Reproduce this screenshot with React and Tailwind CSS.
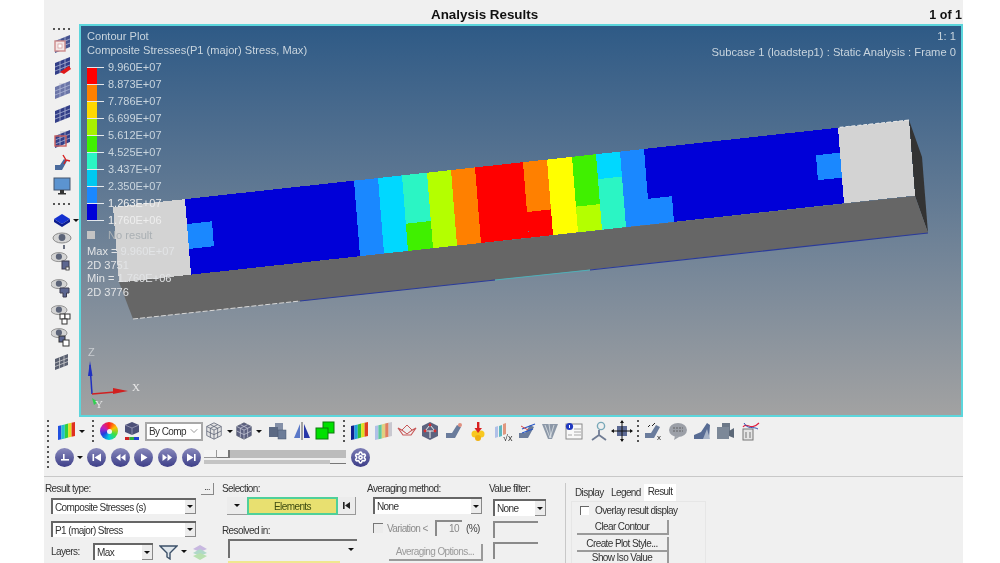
import React from 'react';
import { ChevronDown, Settings } from 'lucide-react';

const FONT = "font-['Liberation_Sans',Arial,sans-serif]";

// beam face: u runs along the top edge, v goes from top edge (0) to bottom edge (1)
const pt = (u, v) => [u + 6 * v, 207 - 0.1093 * (u - 113) + 75.5 * v];
const quad = (u0, u1, v0, v1) =>
  [pt(u0, v0), pt(u1, v0), pt(u1, v1), pt(u0, v1)].map((p) => p.join(',')).join(' ');

const BLUE = '#0000d8';
const SKY = '#1a88ff';
const CYAN = '#00d8ff';
const TEAL = '#2bf5c4';
const GREEN = '#40f000';
const LIME = '#b4ff00';
const ORANGE = '#ff8000';
const RED = '#ff0000';
const YELLOW = '#ffff00';
const GREY = '#d3d3d3';

const cells = [
  [113, 185, 0, 1, GREY],
  [185, 354, 0, 1, BLUE],
  [185, 210, 0.33, 0.66, SKY],
  [354, 378, 0, 1, SKY],
  [378, 402, 0, 1, CYAN],
  [402, 427, 0, 0.64, TEAL],
  [402, 427, 0.64, 1, GREEN],
  [427, 451, 0, 1, LIME],
  [451, 475, 0, 1, ORANGE],
  [475, 523, 0, 1, RED],
  [523, 547, 0, 0.66, ORANGE],
  [523, 547, 0.66, 1, RED],
  [547, 572, 0, 1, YELLOW],
  [572, 596, 0, 0.66, GREEN],
  [572, 596, 0.66, 1, LIME],
  [596, 620, 0, 0.33, CYAN],
  [596, 620, 0.33, 1, TEAL],
  [620, 644, 0, 1, SKY],
  [644, 838, 0, 1, BLUE],
  [644, 668, 0.66, 1, SKY],
  [814, 838, 0.33, 0.66, SKY],
  [838, 909, 0, 1, GREY],
];

const legend = [
  ['9.960E+07', '#ff0000'],
  ['8.873E+07', '#ff8000'],
  ['7.786E+07', '#ffd800'],
  ['6.699E+07', '#a8f000'],
  ['5.612E+07', '#40f000'],
  ['4.525E+07', '#2bf5c4'],
  ['3.437E+07', '#00c8f0'],
  ['2.350E+07', '#1a88ff'],
  ['1.263E+07', '#0000d8'],
  ['1.760E+06', null],
];

const Beam = () => (
  <svg className="absolute inset-0 w-full h-full" viewBox="81 26 880 389">
    <polygon points="909,120 922,157 928,233 915,196" fill="#333333" />
    <polygon points="119,282 915,196 928,233 133,319" fill="#666666" />
    {cells.map(([u0, u1, v0, v1, fill], i) => (
      <polygon key={i} points={quad(u0, u1, v0, v1)} fill={fill} shapeRendering="crispEdges" />
    ))}
    <line x1="133" y1="319" x2="300" y2="301" stroke="#d8d8d8" strokeWidth="1" strokeDasharray="5 2" />
    <line x1="300" y1="301" x2="495" y2="280" stroke="#2a3a9a" strokeWidth="1.2" />
    <line x1="495" y1="280" x2="590" y2="270" stroke="#4fb0b8" strokeWidth="1" />
    <line x1="590" y1="270" x2="928" y2="233" stroke="#2a3a9a" strokeWidth="1.2" />
    <line x1="909" y1="120" x2="838" y2="127.5" stroke="#e8e8e8" strokeWidth="1" strokeDasharray="4 2" />
    {/* triad */}
    <line x1="92" y1="394" x2="90" y2="365" stroke="#2030c0" strokeWidth="1.5" />
    <polygon points="90,361 92.5,376 88,376" fill="#2030c0" />
    <line x1="92" y1="394" x2="115" y2="392" stroke="#d02020" strokeWidth="1.5" />
    <polygon points="128,391 113,388 113,394" fill="#d02020" />
    <polygon points="92,398 98,402 94,405" fill="#30d050" />
  </svg>
);

const ViewportText = () => (
  <>
    <div className="absolute left-[6px] top-[3px] text-[11.1px] leading-[14px] text-[#c9d5de]">
      <div>Contour Plot</div>
      <div>Composite Stresses(P1 (major) Stress, Max)</div>
      <div className="mt-[2px] flex flex-col">
        {legend.map(([label, color], i) => (
          <div key={label} className="flex h-[17px] relative">
            {color && <div className="w-[10px] h-[17px] absolute left-0 top-[9px]" style={{ background: color }} />}
            <div className="w-[17px] h-px bg-[#e4e8ec] absolute top-[8px] left-0" />
            <span className={`ml-[21px] leading-[17px] text-[11px] ${i > 7 ? 'text-[#eeeeee]' : 'text-[#c9d5de]'}`}>{label}</span>
          </div>
        ))}
      </div>
      <div className="flex items-center h-[15px] -mt-[2px]">
        <div className="w-[8px] h-[8px] bg-[#c4c4c4]" />
        <span className="ml-[13px] text-[#aab0b4]">No result</span>
      </div>
      <div className="text-[#e2e4e6] leading-[13.5px] mt-[3px]">
        <div>Max = 9.960E+07</div>
        <div>2D 3751</div>
        <div>Min = 1.760E+06</div>
        <div>2D 3776</div>
      </div>
    </div>
    <div className="absolute right-[5px] top-[2px] text-right text-[11.2px] leading-[16px] text-[#c9d5de]">
      <div>1: 1</div>
      <div>Subcase 1 (loadstep1) : Static Analysis : Frame 0</div>
    </div>
    <span className="absolute left-[7px] top-[318px] text-[11px] text-[#c8ccd0]">Z</span>
    <span className="absolute left-[51px] top-[353px] text-[11px] font-['Liberation_Serif',serif] text-[#e8e8e8]">X</span>
    <span className="absolute left-[14px] top-[370px] text-[11px] font-['Liberation_Serif',serif] text-[#e8e8e8]">Y</span>
  </>
);

const Plate = ({ dark, pale }) => (
  <g>
    <polygon points="4,9 19,3 19,15 4,21" fill={pale ? '#6c76a8' : dark ? '#333f88' : '#46538f'} />
    <path d="M4 13 L19 7 M4 17 L19 11 M9 7 V19 M14 5 V17" stroke="#b9c0dc" strokeWidth="0.7" />
  </g>
);

const Svg = ({ size = 22, children }) => (
  <svg className="shrink-0" width={size} height={size} viewBox="0 0 22 22">{children}</svg>
);

const Eye = ({ large }) => (
  <g transform={large ? 'translate(0,0)' : 'translate(-2,-3) scale(0.9)'}>
    <ellipse cx="11" cy="9" rx="9" ry="5" fill="#d4d4d4" stroke="#8a8a8a" />
    <circle cx="11" cy="8.5" r="3.4" fill="#5c6478" />
  </g>
);

const Dots = ({ vertical, count = 4 }) => (
  <div className={vertical ? 'flex flex-col gap-[3px] w-[2px]' : 'flex gap-[3px]'}>
    {Array.from({ length: count }).map((_, i) => (
      <div key={i} className="w-[2px] h-[2px] bg-[#222222] rounded-full" />
    ))}
  </div>
);

const Caret = () => (
  <div className="w-0 h-0 border-x-[3px] border-x-transparent border-t-[3px] border-t-[#111111]" />
);

const SideBar = () => (
  <div className="w-[35px] h-full flex flex-col items-center shrink-0">
    <div className="h-[9px] flex items-center"><Dots /></div>
    <div className="h-[20px] flex items-center">
      <Svg><Plate /><rect x="4" y="9" width="10" height="10" fill="#f3e6e6" stroke="#cc8a8a" strokeWidth="1.4" /><rect x="7" y="12" width="4" height="4" fill="#fff" stroke="#cc8a8a" strokeWidth="0.6" /></Svg>
    </div>
    <div className="h-[24px] flex items-center">
      <Svg><Plate dark /><path d="M9 18 L18 12 L20 15 L13 20 Z" fill="#e01818" /></Svg>
    </div>
    <div className="h-[24px] flex items-center">
      <Svg><rect x="8" y="5" width="11" height="11" fill="#dcdce4" /><Plate pale /></Svg>
    </div>
    <div className="h-[24px] flex items-center">
      <Svg><Plate dark /></Svg>
    </div>
    <div className="h-[26px] flex items-center">
      <Svg><rect x="9" y="4" width="10" height="11" fill="#d8d8dc" /><Plate dark /><rect x="4" y="9" width="11" height="10" fill="none" stroke="#c86060" strokeWidth="1.4" /></Svg>
    </div>
    <div className="h-[23px] flex items-center">
      <Svg><path d="M4 18 V13 H9 L13 7 L16 9 L11 18 Z" fill="#4a6a9c" /><path d="M12 3 L15 8 M15 8 L19 9 M15 8 L13 12" stroke="#d82020" strokeWidth="1.4" fill="none" /></Svg>
    </div>
    <div className="h-[23px] flex items-center">
      <Svg><rect x="3" y="3" width="16" height="12" fill="#5c94d0" stroke="#44546c" /><rect x="9" y="15" width="4" height="3" fill="#333" /><rect x="7" y="18" width="8" height="1.5" fill="#333" /></Svg>
    </div>
    <div className="h-[13px] flex items-center"><Dots /></div>
    <div className="h-[19px] flex items-center relative">
      <Svg><path d="M11 5 L19 10 L11 15 L3 10 Z" fill="#1430d0" /><path d="M3 10 V13 L11 18 L19 13 V10 L11 15 Z" fill="#0c1c90" /></Svg>
      <div className="absolute -right-[6px] top-[9px]"><Caret /></div>
    </div>
    <div className="h-[21px] flex items-center">
      <Svg><Eye large /><rect x="12" y="16" width="2" height="4" fill="#6a7080" /></Svg>
    </div>
    <div className="h-[26px] flex items-center">
      <Svg><Eye /><rect x="11" y="9" width="7" height="8" fill="#5c6690" stroke="#3c3c50" /><rect x="15" y="15" width="3" height="3" fill="#fff" stroke="#555" /></Svg>
    </div>
    <div className="h-[28px] flex items-center">
      <Svg><Eye /><path d="M9 9 H18 V14 H15.5 V18 H12 V14 H9 Z" fill="#5c6690" stroke="#3c3c50" /></Svg>
    </div>
    <div className="h-[23px] flex items-center">
      <Svg><Eye /><rect x="9" y="9" width="5" height="5" fill="#fff" stroke="#333" /><rect x="14" y="9" width="5" height="5" fill="#fff" stroke="#333" /><rect x="11" y="14" width="5" height="5" fill="#fff" stroke="#333" /></Svg>
    </div>
    <div className="h-[23px] flex items-center">
      <Svg><Eye /><rect x="8" y="8" width="6" height="6" fill="#5c6690" stroke="#333" /><rect x="12" y="12" width="6" height="6" fill="#fff" stroke="#333" /></Svg>
    </div>
    <div className="h-[21px] flex items-center">
      <Svg><polygon points="4,9 17,4 17,15 4,20" fill="#5a6070" /><path d="M4 13 L17 8 M4 16.5 L17 11.5 M8.5 7.5 V18.5 M13 5.8 V17" stroke="#d8d8d8" strokeWidth="0.7" /></Svg>
    </div>
  </div>
);

const Tool = ({ w = 24, children }) => (
  <div className="flex items-center justify-center h-[22px] shrink-0" style={{ width: w }}>{children}</div>
);

const Rainbow = ({ bars }) => (
  <Svg>
    {bars.map((c, i) => (
      <polygon
        key={c}
        points={`${3 + i * 3.4},${6 - i * 0.8} ${6.4 + i * 3.4},${5.2 - i * 0.8} ${6.4 + i * 3.4},${19.2 - i * 0.8} ${3 + i * 3.4},${20 - i * 0.8}`}
        fill={c}
      />
    ))}
  </Svg>
);

const Cube = ({ fill, line }) => (
  <Svg size={20}>
    <path d="M11 2 L19 6 V16 L11 20 L3 16 V6 Z" fill={fill} stroke="#555c70" strokeWidth="0.8" />
    <path d="M3 6 L11 10 L19 6 M11 10 V20 M3 11 L11 15 L19 11 M7 4 L15 8 M15 4 L7 8 M7 8 V18 M15 8 V18" stroke={line} strokeWidth="0.8" fill="none" />
  </Svg>
);

const Stair = ({ children }) => (
  <Svg>
    <path d="M3 18 V13 L9 13 L14 5 L18 7 L12 18 Z" fill="#6a7c9c" />
    {children}
  </Svg>
);

const ToolbarRow1 = () => (
  <div className="flex items-center h-[22px] pl-[3px]">
    <Dots vertical count={5} />
    <div className="ml-[5px]"><Tool w={24}><Rainbow bars={['#2050e0', '#20c0d0', '#30d040', '#e0e020', '#e03020']} /></Tool></div>
    <div className="ml-[1px] mr-[7px]"><Caret /></div>
    <Dots vertical count={5} />
    <div className="ml-[6px] w-[18px] h-[18px] rounded-full bg-[conic-gradient(#ff2020,#ffc000,#40e040,#00d0e0,#2040e0,#c020c0,#ff2020)] flex items-center justify-center shrink-0">
      <div className="w-[5px] h-[5px] rounded-full bg-[#f4f4f4]" />
    </div>
    <div className="ml-[3px]">
      <Tool w={22}>
        <Svg><path d="M11 2 L18 5 V12 L11 15 L4 12 V5 Z" fill="#4c5078" /><path d="M4 5 L11 8 L18 5 M11 8 V15" stroke="#9a9cb8" strokeWidth="0.8" fill="none" /><rect x="4" y="17" width="4.5" height="3" fill="#d02020" /><rect x="8.5" y="17" width="4.5" height="3" fill="#30b040" /><rect x="13" y="17" width="5" height="3" fill="#2040d0" /></Svg>
      </Tool>
    </div>
    <div className="ml-[2px] w-[58px] h-[19px] bg-white border-2 border-[#a8a8a8] flex items-center justify-between pl-[2px] pr-[1px] text-[10px] tracking-[-0.6px] text-[#333] whitespace-nowrap shrink-0">
      <span>By Comp</span><ChevronDown size={12} strokeWidth={1} />
    </div>
    <Tool w={22}><Cube fill="#e4e4e4" line="#555c70" /></Tool>
    <div className="mx-[2px]"><Caret /></div>
    <Tool w={18}><Cube fill="#5c6080" line="#c8cad8" /></Tool>
    <div className="mx-[3px]"><Caret /></div>
    <Tool w={24}>
      <Svg><rect x="9" y="3" width="8" height="13" fill="#8490a8" /><rect x="3" y="7" width="9" height="10" fill="#5c6a84" /><rect x="12" y="10" width="8" height="9" fill="#6c7c98" stroke="#46546c" strokeWidth="0.5" /></Svg>
    </Tool>
    <Tool w={26}>
      <Svg><polygon points="9,4 9,18 3,18" fill="#5a78c8" /><rect x="10.5" y="2" width="1" height="18" fill="#555" /><polygon points="13,4 13,18 19,18" fill="#2838a8" /></Svg>
    </Tool>
    <Tool w={20}>
      <Svg><rect x="9" y="2" width="11" height="11" fill="#00e000" stroke="#0c7a0c" /><rect x="2" y="8" width="12" height="11" fill="#00e000" stroke="#0c7a0c" /></Svg>
    </Tool>
    <div className="ml-[8px]"><Dots vertical count={5} /></div>
    <div className="ml-px"><Tool w={25}><Rainbow bars={['#102090', '#20a0e0', '#30c040', '#e0e020', '#e04020']} /></Tool></div>
    <Tool w={24}><Rainbow bars={['#b0c0e8', '#60c8a0', '#e0d080', '#e08060', '#c8c8d0']} /></Tool>
    <Tool w={23}>
      <Svg><path d="M2 8 L11 13 L20 8 L15 15 H7 Z" fill="none" stroke="#c85858" strokeWidth="1.2" /><path d="M11 5 L16 10 L11 14 L6 10 Z" fill="#eee" stroke="#c85858" /></Svg>
    </Tool>
    <Tool w={24}>
      <Svg><path d="M11 2 L19 6 V16 L11 20 L3 16 V6 Z" fill="#5c6480" /><path d="M11 5 L16 11 H6 Z M11 11 V18" stroke="#f0f0f0" strokeWidth="1" fill="none" /><circle cx="11" cy="5" r="1.4" fill="#d83030" /><circle cx="6" cy="11" r="1.4" fill="#d83030" /><circle cx="16" cy="11" r="1.4" fill="#d83030" /></Svg>
    </Tool>
    <Tool w={24}><Stair><circle cx="17" cy="5" r="2" fill="#e09080" /></Stair></Tool>
    <Tool w={24}>
      <Svg><circle cx="8" cy="14" r="3.5" fill="#f8c820" /><circle cx="14" cy="14" r="3.5" fill="#f8c820" /><circle cx="11" cy="18" r="3" fill="#f0b010" /><rect x="10" y="2" width="2.4" height="8" fill="#d82020" /><polygon points="7.5,8 15,8 11,13" fill="#d82020" /></Svg>
    </Tool>
    <Tool w={25}>
      <Svg><polygon points="3,7 6,6 6,17 3,18" fill="#b0c0e8" /><polygon points="7,6 10,5 10,16 7,17" fill="#60b8c0" /><polygon points="11,4 14,3 14,14 11,15" fill="#e09880" /><text x="11" y="21" fontSize="9" fill="#333" fontFamily="Liberation Sans">√x</text></Svg>
    </Tool>
    <Tool w={23}><Stair><path d="M6 9 L19 4 M6 13 L17 9" stroke="#2858c8" strokeWidth="1.3" /><path d="M5 6 L12 10" stroke="#d84848" strokeWidth="1" /></Stair></Tool>
    <Tool w={23}>
      <Svg><path d="M3 4 L19 4 L13 19 H9 Z" fill="#8c98a8" /><path d="M6 5 L11 18 M10 4 L12 18 M15 5 L11 18" stroke="#e0e4e8" strokeWidth="0.8" /></Svg>
    </Tool>
    <Tool w={25}>
      <Svg><rect x="3" y="4" width="16" height="15" fill="#f8f8f8" stroke="#8a8a8a" /><path d="M11 9 H18 M11 12 H18 M11 15 H18 M5 15 H9" stroke="#a8a8a8" /><circle cx="6.5" cy="6.5" r="3.6" fill="#2038c0" /><rect x="6" y="5" width="1" height="3" fill="#fff" /></Svg>
    </Tool>
    <Tool w={25}>
      <Svg><circle cx="13" cy="6" r="3.6" fill="none" stroke="#78a8b8" strokeWidth="1.4" /><path d="M11 10 V15 L4 20 M11 15 L18 20" stroke="#707c94" strokeWidth="1.8" fill="none" /></Svg>
    </Tool>
    <Tool w={22}>
      <Svg><rect x="6" y="6" width="10" height="10" fill="#5c6a94" /><path d="M11 1 V21 M1 11 H21" stroke="#111" strokeWidth="1" /><path d="M11 0 L13 3 H9 Z M11 22 L13 19 H9 Z M0 11 L3 9 V13 Z M22 11 L19 9 V13 Z" fill="#111" /></Svg>
    </Tool>
    <div className="ml-[4px] mr-px"><Dots vertical count={5} /></div>
    <Tool w={26}><Stair><path d="M6 7 L8 5 M10 6 L13 3" stroke="#222" strokeWidth="1" /><text x="15" y="20" fontSize="8" fill="#222" fontFamily="Liberation Sans">x</text></Stair></Tool>
    <Tool w={24}>
      <Svg><ellipse cx="11" cy="10" rx="9" ry="7" fill="#9ca0a8" /><path d="M8 16 L7 20 L12 17 Z" fill="#9ca0a8" /><path d="M6 8 H16 M6 11 H16" stroke="#555" strokeWidth="0.8" strokeDasharray="2 1" /></Svg>
    </Tool>
    <Tool w={23}>
      <Svg><path d="M3 19 V15 L10 12 L16 3 L19 5 L18 19 Z" fill="#586c94" /><path d="M12 19 L16 9 L19 19 Z" fill="#a8b4c8" /></Svg>
    </Tool>
    <Tool w={24}>
      <Svg><rect x="8" y="3" width="8" height="13" fill="#6c7888" /><rect x="3" y="7" width="12" height="12" fill="#7c8898" /><polygon points="15,11 20,8 20,18 15,16" fill="#5c6878" /></Svg>
    </Tool>
    <Tool w={26}>
      <Svg><rect x="4" y="9" width="10" height="11" fill="#e4e4e4" stroke="#777" /><path d="M7 12 V18 M11 12 V18" stroke="#777" /><path d="M4 7 C8 1 11 12 20 3" stroke="#e02040" strokeWidth="1.2" fill="none" /><path d="M5 3 C9 10 14 6 19 9" stroke="#3050b0" strokeWidth="1" fill="none" /></Svg>
    </Tool>
  </div>
);

const RoundBtn = ({ children, className = '' }) => (
  <div className={`w-[19px] h-[19px] rounded-full bg-linear-to-b from-[#8a8abc] to-[#3e3e88] flex items-center justify-center shrink-0 ${className}`}>
    <svg width="13" height="13" viewBox="0 0 13 13" fill="#ffffff">{children}</svg>
  </div>
);

const ToolbarRow2 = () => (
  <div className="flex items-center h-[22px] pl-[3px] mt-[4px]">
    <Dots vertical count={5} />
    <RoundBtn className="ml-[6px]"><rect x="3" y="8" width="8" height="1.6" /><rect x="5" y="3" width="1.6" height="5" /></RoundBtn>
    <div className="ml-[3px]"><Caret /></div>
    <RoundBtn className="ml-[4px]"><rect x="2.5" y="3" width="1.6" height="7" /><polygon points="11,2.5 11,10.5 4.5,6.5" /></RoundBtn>
    <RoundBtn className="ml-[5px]"><polygon points="6.5,3 6.5,10 2,6.5" /><polygon points="11.5,3 11.5,10 7,6.5" /></RoundBtn>
    <RoundBtn className="ml-[4px]"><polygon points="4,2.5 4,10.5 10.5,6.5" /></RoundBtn>
    <RoundBtn className="ml-[5px]"><polygon points="1.5,3 1.5,10 6,6.5" /><polygon points="6.5,3 6.5,10 11,6.5" /></RoundBtn>
    <RoundBtn className="ml-[5px]"><polygon points="2,2.5 2,10.5 8.5,6.5" /><rect x="9" y="3" width="1.6" height="7" /></RoundBtn>
    <div className="ml-[3px] w-[142px] flex flex-col gap-[2px] shrink-0">
      <div className="h-[8px] bg-[#bcbcbc] flex">
        <div className="w-[13px] bg-[#f4f4f4] border-r border-b border-[#999]" />
        <div className="w-[13px] bg-[#f4f4f4] border-r-2 border-b border-[#777]" />
      </div>
      <div className="h-[4px] bg-[#c4c4c4] flex justify-end">
        <div className="w-[16px] bg-[#eeeeee] border-b border-[#777]" />
      </div>
    </div>
    <div className="ml-[5px]"><div className="w-[19px] h-[19px] rounded-full bg-linear-to-b from-[#7c7cb4] to-[#3e3e88] flex items-center justify-center"><Settings size={13} color="#ffffff" strokeWidth={3} /></div></div>
  </div>
);

const Sel = ({ children, className = '' }) => (
  <div className={`flex items-center justify-between bg-white border-t-2 border-l-2 border-[#666666] pl-[2px] text-[10px] ${className}`}>
    <span>{children}</span>
    <div className="w-[11px] self-stretch flex items-center justify-center bg-[#ececec] border-r border-b border-[#888]">
      <Caret />
    </div>
  </div>
);

const Input = ({ className = '', children }) => (
  <div className={`border-t-2 border-l-2 border-[#8a8a8a] text-[10px] text-[#888] ${className}`}>{children}</div>
);

const Btn = ({ children, className = '' }) => (
  <div className={`flex items-center justify-center bg-[#f0f0f0] border-r-2 border-b-2 border-[#9a9a9a] text-[10px] leading-[11px] ${className}`}>{children}</div>
);

const Label = ({ children, className = '' }) => (
  <div className={`h-[12px] leading-[12px] text-[10px] text-[#333] ${className}`}>{children}</div>
);

const BottomPanel = () => (
  <div className="flex border-t border-[#c8c8c8] mt-[8px] h-[88px] pt-[6px] text-[#333] tracking-[-0.6px] overflow-hidden">
    <div className="w-[178px] pl-px shrink-0">
      <div className="w-[169px] flex justify-between">
        <Label>Result type:</Label>
        <div className="w-[13px] h-[12px] border-r border-b border-[#888] text-[9px] leading-[8px] text-center">...</div>
      </div>
      <Sel className="ml-[6px] mt-[3px] w-[145px] h-[16px]">Composite Stresses (s)</Sel>
      <Sel className="ml-[6px] mt-[7px] w-[145px] h-[16px]">P1 (major) Stress</Sel>
      <div className="flex items-center ml-[6px] mt-[6px] h-[17px]">
        <span className="text-[10px] w-[42px]">Layers:</span>
        <Sel className="w-[60px] h-[17px]">Max</Sel>
        <svg className="ml-[6px]" width="19" height="16" viewBox="0 0 19 16"><path d="M1 2 H18 L11 9 V15 L8 13 V9 Z" fill="#dfe6ec" stroke="#3c5068" strokeWidth="1.4" /></svg>
        <div className="ml-[3px]"><Caret /></div>
        <svg className="ml-[4px]" width="18" height="18" viewBox="0 0 18 18"><path d="M9 2 L16 6 L9 9 L2 6 Z" fill="#c8b8e0" /><path d="M9 6 L16 10 L9 13 L2 10 Z" fill="#b0d8c8" /><path d="M9 10 L16 13 L9 17 L2 13 Z" fill="#b8e0b0" /></svg>
      </div>
    </div>

    <div className="w-[145px] shrink-0">
      <Label>Selection:</Label>
      <div className="flex ml-[5px] mt-[2px] h-[18px]">
        <div className="w-[20px] bg-[#ececec] border-b border-[#999] flex items-center justify-center"><Caret /></div>
        <div className="w-[91px] bg-[#e8e070] border-2 border-[#4fd09a] flex items-center justify-center text-[10px] text-[#3c4a10]">Elements</div>
        <div className="w-[18px] bg-[#ececec] border-r border-b border-[#999] flex items-center justify-center">
          <svg width="9" height="9" viewBox="0 0 9 9" fill="#222"><rect x="1" y="1" width="1.6" height="7" /><polygon points="8,1 8,8 3,4.5" /></svg>
        </div>
      </div>
      <Label className="mt-[10px]">Resolved in:</Label>
      <div className="ml-[6px] mt-[2px] w-[129px] h-[19px] border-t-2 border-l-2 border-[#707070] flex justify-end items-center pr-[3px]"><Caret /></div>
      <div className="ml-[6px] mt-[3px] w-[112px] h-[3px] bg-[#f0e890]" />
    </div>

    <div className="w-[122px] shrink-0">
      <Label>Averaging method:</Label>
      <Sel className="ml-[6px] mt-[2px] w-[109px] h-[17px]">None</Sel>
      <div className="flex items-center ml-[6px] mt-[6px] h-[16px] text-[10px] text-[#8c8c8c]">
        <div className="w-[10px] h-[10px] border-t border-l border-[#777] bg-[#ececec]" />
        <span className="ml-[4px] w-[48px]">Variation &lt;</span>
        <Input className="w-[27px] h-[16px] text-right pr-[3px] leading-[14px]">10</Input>
        <span className="ml-[4px] text-[#444]">(%)</span>
      </div>
      <Btn className="ml-[22px] mt-[8px] w-[94px] h-[17px] text-[#9a9a9a]">Averaging Options...</Btn>
    </div>

    <div className="w-[76px] shrink-0">
      <Label>Value filter:</Label>
      <Sel className="ml-[4px] mt-[4px] w-[53px] h-[17px]">None</Sel>
      <Input className="ml-[4px] mt-[5px] w-[45px] h-[17px]" />
      <Input className="ml-[4px] mt-[4px] w-[45px] h-[17px]" />
    </div>

    <div className="w-px h-full bg-[#c8c8c8] shrink-0" />

    <div className="ml-[5px] w-[135px] shrink-0 text-[10px]">
      <div className="flex h-[17px] mt-px items-center">
        <div className="w-[39px] pl-[4px]">Display</div>
        <div className="w-[34px] pl-[1px]">Legend</div>
        <div className="w-[32px] h-full bg-white text-center leading-[15px]">Result</div>
      </div>
      <div className="border border-[#e6e6e6] h-[80px] px-[5px] pt-[3px]">
        <div className="flex items-center h-[11px]">
          <div className="ml-[3px] w-[9px] h-[9px] border-t border-l border-[#666] bg-white" />
          <span className="ml-[6px]">Overlay result display</span>
        </div>
        <Btn className="mt-[4px] w-[92px] h-[15px]">Clear Contour</Btn>
        <Btn className="mt-[2px] w-[92px] h-[15px]">Create Plot Style...</Btn>
        <div className="w-[92px] h-[11px] border-r-2 border-[#9a9a9a] text-center leading-[11px]">Show Iso Value</div>
      </div>
    </div>
  </div>
);

export default function App() {
  return (
    <div className={`w-[1000px] h-[563px] bg-white overflow-hidden pl-[44px] ${FONT}`}>
      <div className="w-[919px] h-full bg-[#f0f0f0] flex flex-col blur-[0.4px]">
        <div className="h-[24px] flex items-center shrink-0 font-bold text-[13.4px] text-[#111111] pt-[6px]">
          <span className="ml-[387px]">Analysis Results</span>
          <span className="ml-auto mr-px text-[12.5px]">1 of 1</span>
        </div>
        <div className="flex h-[393px] shrink-0">
          <SideBar />
          <div className="flex-1 relative border-2 border-[#5cd6dc] bg-linear-to-b from-[#2e5a86] to-[#a2a2a2]">
            <Beam />
            <ViewportText />
          </div>
        </div>
        <div className="pt-[3px]">
          <ToolbarRow1 />
          <ToolbarRow2 />
        </div>
        <BottomPanel />
      </div>
    </div>
  );
}
